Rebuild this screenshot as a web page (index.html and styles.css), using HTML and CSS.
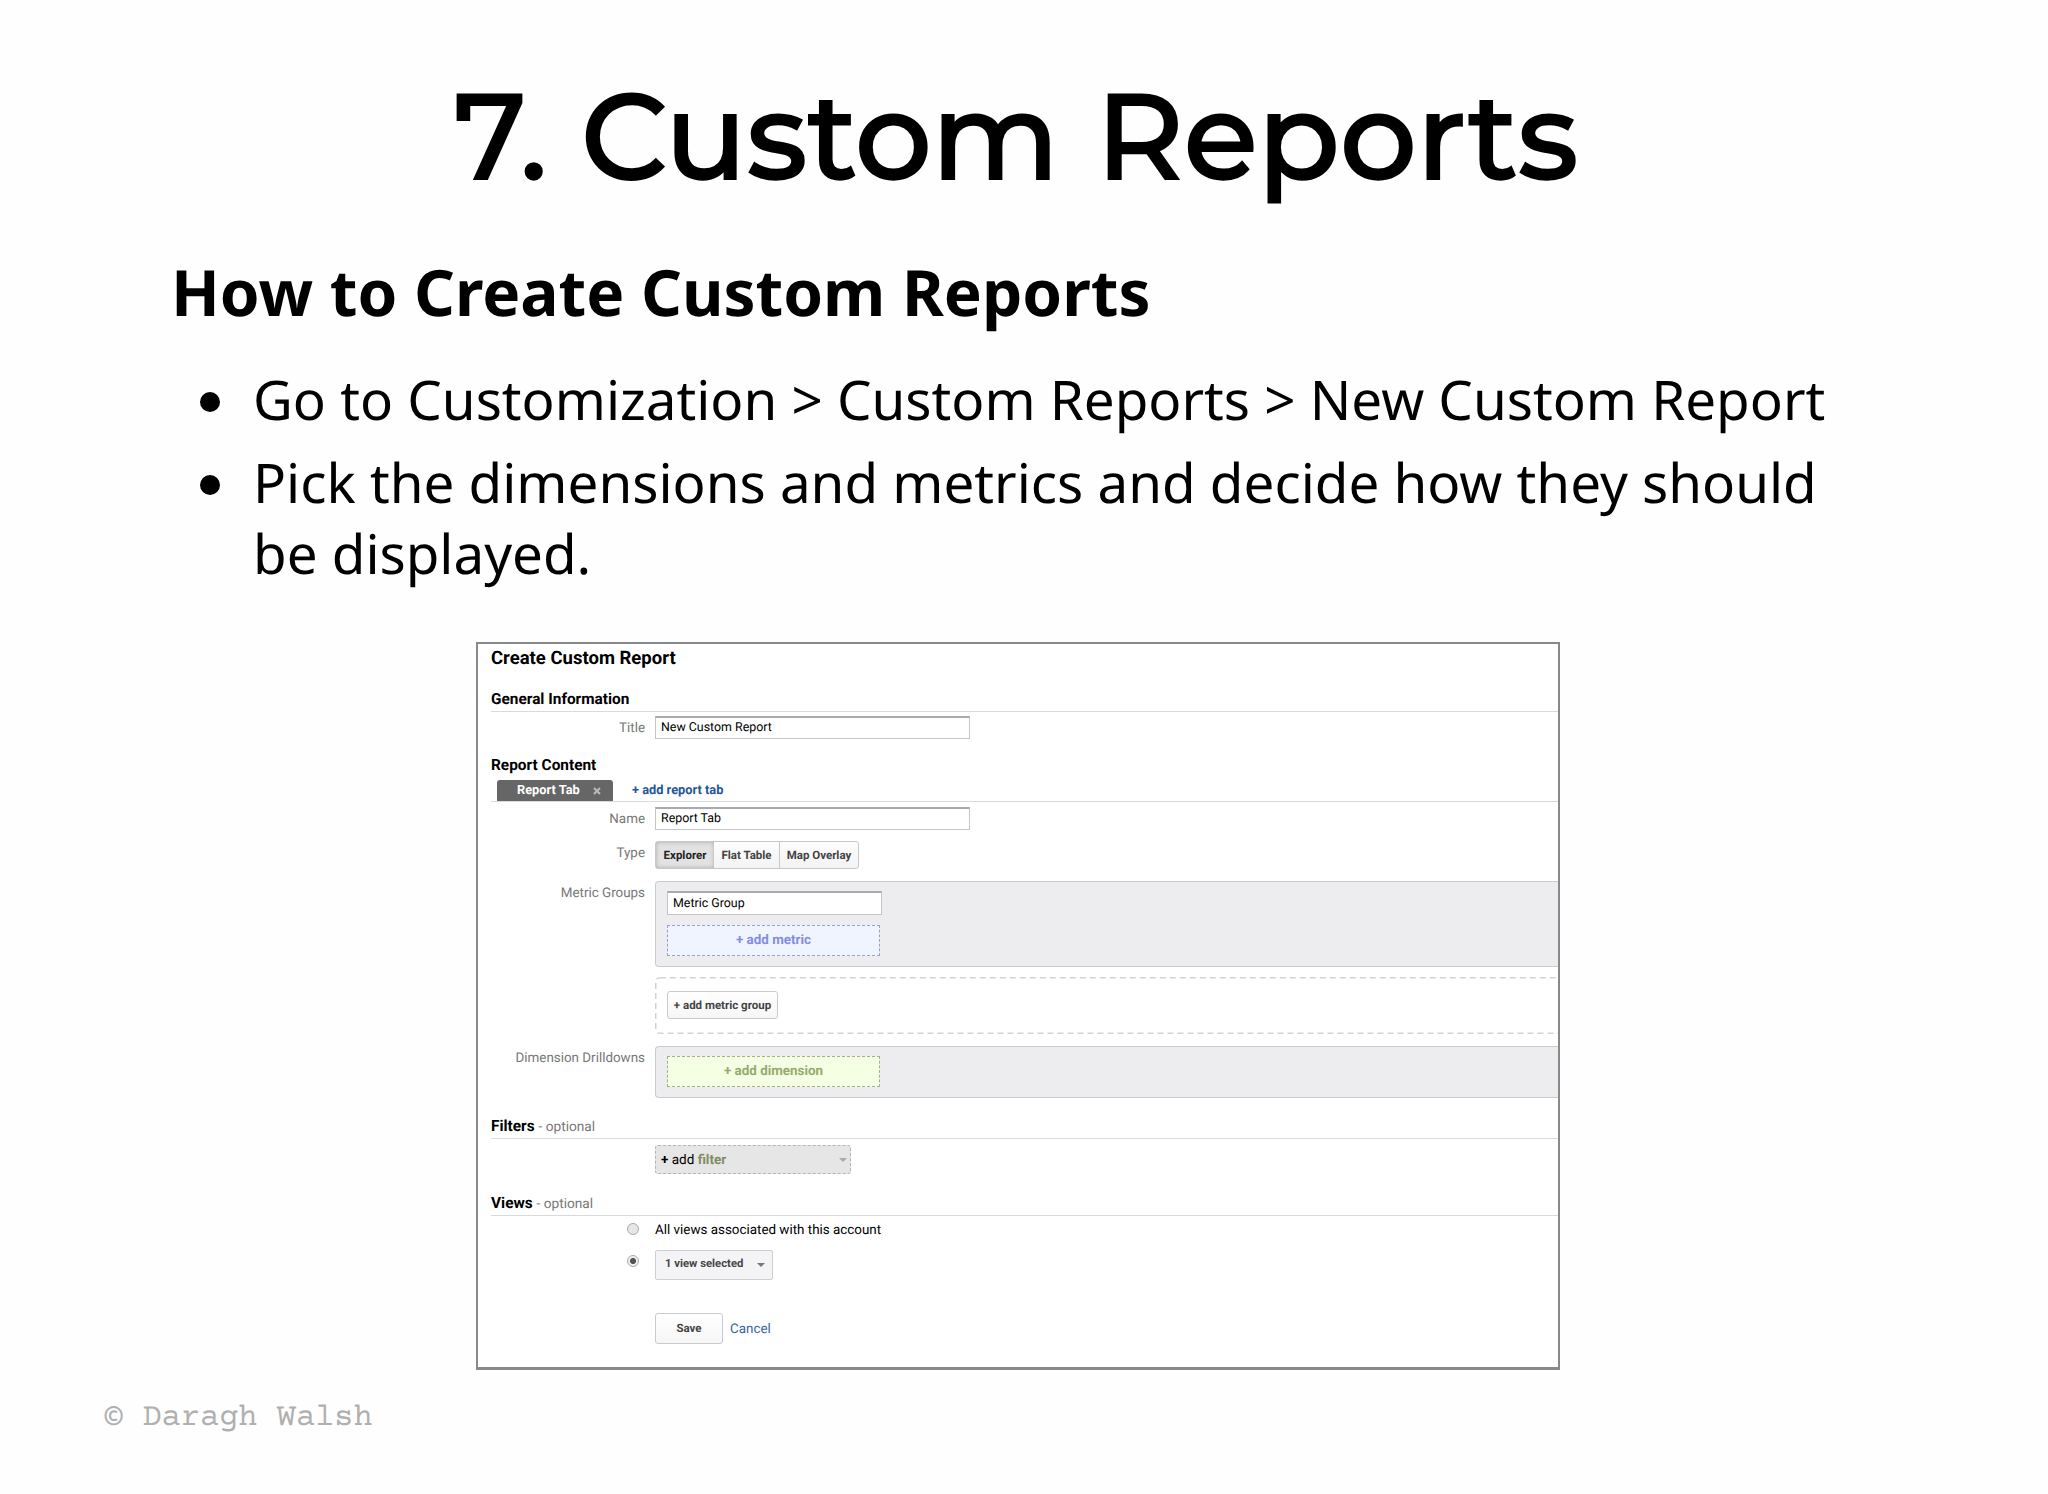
FILE: index.html
```html
<!DOCTYPE html>
<html lang="en">
<head>
<meta charset="utf-8">
<title>7. Custom Reports</title>
<link rel="stylesheet" href="styles.css">
</head>
<body>
<main class="slide">
  <h1 class="slide-title"><span class="w-num">7.</span><span class="w-custom">Custom</span><span class="w-reports">Reports</span></h1>
  <h2 class="subtitle">How to Create Custom Reports</h2>
  <ul class="points">
    <li><span class="l1">Go to Customization &gt; Custom Reports &gt; New Custom Report</span></li>
    <li><span class="l2">Pick the dimensions and metrics and decide how they should<br>be displayed.</span></li>
  </ul>
  <section class="card">
    <h3 class="card-title">Create Custom Report</h3>
    <h4 class="section general">General Information</h4>
    <div class="row row-title"><label class="label">Title</label><div class="input">New Custom Report</div></div>
    <h4 class="section content">Report Content</h4>
    <div class="tabs">
      <div class="tab"><span>Report Tab</span><svg class="close" viewBox="0 0 8 8"><path d="M1 1l6 6M7 1L1 7"/></svg></div>
      <a class="add-tab">+ add report tab</a>
    </div>
    <div class="row row-name"><label class="label">Name</label><div class="input">Report Tab</div></div>
    <div class="row row-type"><label class="label">Type</label>
      <div class="segmented"><span class="seg seg-on">Explorer</span><span class="seg seg-flat">Flat Table</span><span class="seg seg-map">Map Overlay</span></div>
    </div>
    <div class="row row-metric"><label class="label">Metric Groups</label>
      <div class="panel"><div class="input input-small">Metric Group</div><div class="drop metric">+ add metric</div></div>
    </div>
    <div class="row row-group"><span class="label"></span>
      <div class="dashed-panel"><svg class="outline"><rect x="0.75" y="0.75" width="920" height="55.5" rx="4"/></svg><span class="button add-group">+ add metric group</span></div>
    </div>
    <div class="row row-dimension"><label class="label">Dimension Drilldowns</label>
      <div class="panel"><div class="drop dimension">+ add dimension</div></div>
    </div>
    <h4 class="section filters">Filters <small>- optional</small></h4>
    <div class="row row-filter"><span class="label"></span>
      <div class="filter"><span><b>+</b> add <b class="olive">filter</b></span><i class="caret"></i></div>
    </div>
    <h4 class="section views">Views <small>- optional</small></h4>
    <div class="row row-all"><span class="label"><i class="radio"></i></span><span class="all-views">All views associated with this account</span></div>
    <div class="row row-selected"><span class="label"><i class="radio checked"></i></span>
      <div class="select"><span>1 view selected</span><i class="caret"></i></div>
    </div>
    <div class="row row-actions"><span class="label"></span><span class="button save">Save</span><a class="cancel">Cancel</a></div>
  </section>
  <footer class="footer">© Daragh Walsh</footer>
</main>
</body>
</html>
```
FILE: styles.css
```css
* { box-sizing: border-box; }
body { margin: 0; background: #fefefe; color: #000; font-family: Roboto, "Liberation Sans", sans-serif; text-rendering: geometricPrecision; }
.slide { width: 2048px; height: 1494px; display: flex; flex-direction: column; overflow: hidden; }
h1, h2, h3, h4, ul { margin: 0; padding: 0; }

.slide-title { display: flex; margin: 67px 0 0 454px; height: 139px; font: 500 120.7px/140px Montserrat, Inter, sans-serif; white-space: nowrap; -webkit-text-stroke: 2px #000; }
.w-num { width: 127px; }
.w-custom { width: 515px; }

.subtitle { margin: 43px 0 0 171px; height: 87px; font: 700 63.85px/86px "Noto Sans", sans-serif; white-space: nowrap; }
.points { list-style: none; margin: 29px 0 0 200px; height: 277px; font: 400 54.73px/70.5px "Noto Sans", sans-serif; white-space: nowrap; }
.points li { display: flex; gap: 33px; margin-bottom: 12.5px; }
.points li::before { content: ""; width: 20px; height: 20px; margin-top: 27px; border-radius: 50%; background: #000; }

.card { width: 1084px; height: 728px; margin-left: 476px; padding-left: 13px; border: 2px solid #88898a; border-bottom-width: 3px; background: #fff; overflow: hidden; }
.card-title { font-size: 18.5px; line-height: 28px; font-weight: 700; }
.section { height: 25px; border-bottom: 1px solid #d9dadb; font-size: 15.4px; line-height: 25px; font-weight: 700; }
.section small { font-size: 13.7px; font-weight: 400; color: #777; }
.general { margin-top: 15px; }
.content { margin-top: 15px; border-bottom: 0; }
.filters { margin-top: 16px; }
.views { margin-top: 17px; }

.row { display: flex; }
.label { width: 154px; margin-right: 10px; flex: none; text-align: right; font-size: 13.4px; line-height: 25px; color: #777; }
.row-title { margin-top: 4px; height: 22px; }
.row-name { margin-top: 5px; height: 22px; }
.row-type { margin-top: 12px; height: 28px; }
.row-metric { margin-top: 12px; height: 86px; }
.row-group { margin-top: 10px; height: 57px; }
.row-dimension { margin-top: 12px; height: 52px; }
.row-filter { margin-top: 6px; height: 29px; }
.row-all { margin-top: 4px; height: 20px; }
.row-selected { margin-top: 10px; height: 30px; }
.row-actions { margin-top: 33px; height: 31px; align-items: center; }

.input { width: 315px; height: 23px; padding-left: 5px; border: 1px solid #c4c5c8; border-top: 2px solid #a9aaad; background: #fff; font-size: 12.4px; line-height: 19px; }
.input-small { width: 215px; height: 24px; line-height: 21px; }

.tabs { display: flex; margin-top: 2px; height: 22px; border-bottom: 1px solid #d9dadb; font-size: 12.8px; line-height: 22px; font-weight: 700; }
.tab { display: flex; align-items: center; gap: 13px; width: 116px; height: 21px; margin-left: 6px; padding-left: 20px; border-radius: 3px 3px 0 0; background: #666; color: #fff; }
.close { width: 8px; height: 8px; fill: none; stroke: #bbb; stroke-width: 2; }
.add-tab { margin-left: 19px; color: #24579a; }

.segmented { display: flex; width: 204px; height: 28px; border: 1px solid #c8c8ca; border-radius: 3px; background: linear-gradient(#fdfdfd, #f3f3f5); font-size: 11.5px; line-height: 27px; font-weight: 700; color: #444; text-align: center; }
.seg-on { width: 58px; background: #e2e2e3; box-shadow: inset 0 0 4px #aaa; color: #222; }
.seg-flat { width: 66px; border-right: 1px solid #c8c8ca; }
.seg-map { flex: 1; }

.panel { flex: 1; padding: 9px 0 0 11px; border: 1px solid #c9cacc; border-right: 0; border-radius: 4px 0 0 4px; background: #ededef; }
.drop { width: 213px; height: 31px; border: 1px dashed; text-align: center; font-size: 13.4px; line-height: 30px; font-weight: 700; }
.metric { margin-top: 10px; border-color: #999ddd; background: #eff4ff; color: #858dde; }
.dimension { border-color: #a3b284; background: #f4ffe3; color: #97ab6c; }
.dashed-panel { position: relative; flex: 1; padding: 14px 0 0 12px; }
.outline { position: absolute; inset: 0; width: 908px; height: 57px; fill: none; stroke: #d2d3d4; stroke-width: 1.5; stroke-dasharray: 6 4; }
.button { display: block; border: 1px solid #c9cacc; border-radius: 3px; background: linear-gradient(#fff, #f6f6f7); text-align: center; font-size: 11.5px; font-weight: 700; color: #444; }
.add-group { position: relative; width: 111px; height: 28px; line-height: 26px; }
.filter { display: flex; justify-content: space-between; align-items: center; width: 196px; padding: 0 3px 0 5px; border: 1px dashed #b4b5b7; border-radius: 3px; background: #e6e6e6; font-size: 13.5px; }
.filter .olive { color: #818c62; }
.caret { border: 4px solid transparent; border-top-color: #aaa; border-bottom: 0; }
.radio { display: inline-block; width: 12px; height: 12px; margin: 3px 6px 0 0; border: 1px solid #aaa; border-radius: 50%; background: #e6e6e6; vertical-align: top; }
.checked { margin-top: 5px; background: radial-gradient(circle, #555 0 2.7px, #eee 3.3px); }
.all-views { font-size: 13.4px; line-height: 22px; }
.select { display: flex; justify-content: space-between; align-items: center; width: 118px; padding: 0 7px 4px 9px; border: 1px solid #cecfd1; border-radius: 2px; background: #f4f4f6; font-size: 11.3px; font-weight: 700; color: #444; }
.select .caret { border-top-color: #777; margin-top: 3px; }
.save { width: 68px; height: 31px; line-height: 28px; }
.cancel { margin: 1px 0 0 7px; font-size: 13.4px; color: #3766a5; }
.footer { margin: 28px 0 0 104px; font: 400 32px/41px "Courier Prime", "Liberation Mono", monospace; color: #b0b0b0; }
```
